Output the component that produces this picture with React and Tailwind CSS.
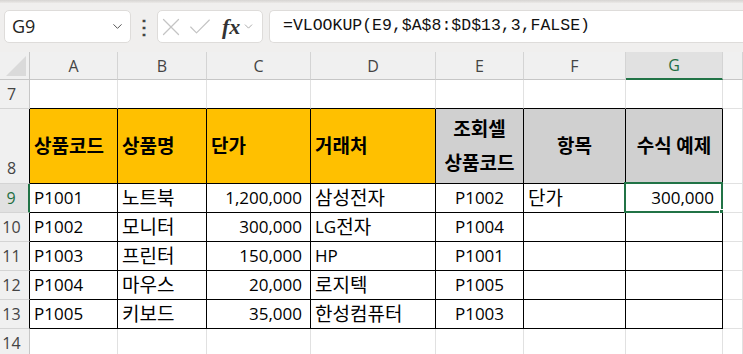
import React from "react";
import { ChevronDown, X, Check } from "lucide-react";

const FONT = { fontFamily: '"Open Sans", "Noto Sans CJK KR", sans-serif' };

const COLS = ["A", "B", "C", "D", "E", "F", "G", "H"];
const ROWS = [7, 8, 9, 10, 11, 12, 13, 14];

const data = [
  ["P1001", "노트북", "1,200,000", "삼성전자", "P1002", "단가", "300,000"],
  ["P1002", "모니터", "300,000", "LG전자", "P1004", "", ""],
  ["P1003", "프린터", "150,000", "HP", "P1001", "", ""],
  ["P1004", "마우스", "20,000", "로지텍", "P1005", "", ""],
  ["P1005", "키보드", "35,000", "한성컴퓨터", "P1003", "", ""],
];

const inTable = (r, c) => r >= 8 && r <= 13 && c >= 0 && c <= 6;

// hangul glyphs in the sheet font run a bit larger than latin
function Txt({ children }) {
  const parts = String(children).split(/([\uac00-\ud7a3]+)/).filter(Boolean);
  return parts.map((p, i) =>
    /[\uac00-\ud7a3]/.test(p) ? (
      <span key={i} className="text-[19px]">
        {p}
      </span>
    ) : (
      <span key={i}>{p}</span>
    )
  );
}

function Cell({ r, c }) {
  const inside = inTable(r, c);
  const rightBlack = inside || inTable(r, c + 1);
  const bottomBlack = inside || inTable(r + 1, c);
  let bg = "bg-white";
  let content = null;
  let align = "justify-start pl-1";

  if (r === 8 && c <= 3) {
    bg = "bg-[#ffc000]";
    content = (
      <span className="font-bold">
        <Txt>{["상품코드", "상품명", "단가", "거래처"][c]}</Txt>
      </span>
    );
  } else if (r === 8 && c <= 6) {
    bg = "bg-[#d0d0d0]";
    align = "justify-center";
    content =
      c === 4 ? (
        <span className="font-bold text-center text-[19px] leading-[34px]">
          조회셀
          <br />
          상품코드
        </span>
      ) : (
        <span className="font-bold">
          <Txt>{c === 5 ? "항목" : "수식 예제"}</Txt>
        </span>
      );
  } else if (r >= 9 && r <= 13 && c <= 6) {
    const v = data[r - 9][c];
    if (c === 2 || c === 6) align = "justify-end pr-2";
    if (c === 4) align = "justify-center";
    content = <Txt>{v}</Txt>;
  }

  return (
    <div
      className={`relative flex items-center ${align} ${bg} border-r border-b ${
        rightBlack ? "border-r-black" : "border-r-[#e1e1e1]"
      } ${bottomBlack ? "border-b-black" : "border-b-[#e1e1e1]"} text-[17px] text-black whitespace-nowrap`}
    >
      {content}
      {r === 9 && c === 6 && (
        <div className="absolute -left-[2px] -top-[2px] -right-[1px] -bottom-[1px] border-2 border-[#217346]">
          <div className="absolute -right-[4px] -bottom-[4px] w-[6px] h-[6px] bg-[#217346] border border-white" />
        </div>
      )}
    </div>
  );
}

export default function App() {
  return (
    <div className="w-[743px] h-[354px] overflow-hidden bg-white" style={FONT}>
      {/* formula bar */}
      <div className="h-[52px] bg-[#f0efee] flex flex-col">
        <div className="h-[3px] bg-gradient-to-b from-[#d6d4d2] to-[#ebe9e7]" />
        <div className="flex items-center pt-[7px] pl-[4px]">
          <div className="w-[127px] h-[33px] bg-white border border-[#dedcda] rounded-[5px] flex items-center justify-between pl-[7px] pr-[5px]">
            <span className="text-[18px] text-[#222]">G9</span>
            <ChevronDown size={15} strokeWidth={1.6} className="text-[#555]" />
          </div>
          <div className="w-[26px] flex justify-center text-[#444] text-[20px] font-bold leading-none">⋮</div>
          <div className="w-[106px] h-[33px] bg-white border border-[#dedcda] rounded-[5px] flex items-center">
            <X size={30} strokeWidth={1} className="text-[#c4c4c4] -ml-[2px]" />
            <Check size={28} strokeWidth={1} className="text-[#c4c4c4]" />
            <span
              className="ml-[8px] text-[22px] italic font-bold text-[#333] leading-none"
              style={{ fontFamily: '"Liberation Serif", serif' }}
            >
              fx
            </span>
            <ChevronDown size={13} strokeWidth={1.5} className="text-[#999] ml-[2px]" />
          </div>
          <div className="ml-[6px] flex-1 h-[33px] bg-white border border-[#dedcda] rounded-l-[5px] border-r-0 flex items-center pl-[13px]">
            <span className="text-[16.5px] text-[#111]" style={{ fontFamily: '"Liberation Mono", monospace' }}>
              =VLOOKUP(E9,$A$8:$D$13,3,FALSE)
            </span>
          </div>
        </div>
      </div>

      {/* sheet grid */}
      <div className="grid grid-cols-[30px_88px_89px_104px_125px_88px_102px_97px_1fr] grid-rows-[28px_29px_75px_29px_29px_29px_29px_29px_29px]">
        <div className="bg-[#f0f0f0] border-r border-b border-[#c6c6c6] relative">
          <div className="absolute right-[3px] bottom-[3px] w-0 h-0 border-l-[20px] border-l-transparent border-b-[20px] border-b-[#dadada]" />
        </div>
        {COLS.map((l) => (
          <div
            key={l}
            className={`flex items-center justify-center text-[16px] border-r border-r-[#d4d4d4] ${
              l === "G"
                ? "bg-[#e1e1e1] text-[#1e6e42] border-b-2 border-b-[#217346]"
                : "bg-[#f0f0f0] text-[#444] border-b border-b-[#c6c6c6]"
            }`}
          >
            {l === "H" ? "" : l}
          </div>
        ))}
        {ROWS.map((r) => (
          <React.Fragment key={r}>
            <div
              className={`flex justify-center pr-[6px] ${r === 8 ? "items-end pb-[3px]" : "items-center"} text-[16px] border-b border-b-[#d4d4d4] ${
                r === 9
                  ? "bg-[#e1e1e1] text-[#1e6e42] border-r-2 border-r-[#217346]"
                  : `bg-[#f0f0f0] text-[#444] border-r ${r >= 8 && r <= 13 ? "border-r-black" : "border-r-[#c6c6c6]"}`
              }`}
            >
              {r}
            </div>
            {COLS.map((l, c) => (
              <Cell key={l} r={r} c={c} />
            ))}
          </React.Fragment>
        ))}
      </div>
    </div>
  );
}
